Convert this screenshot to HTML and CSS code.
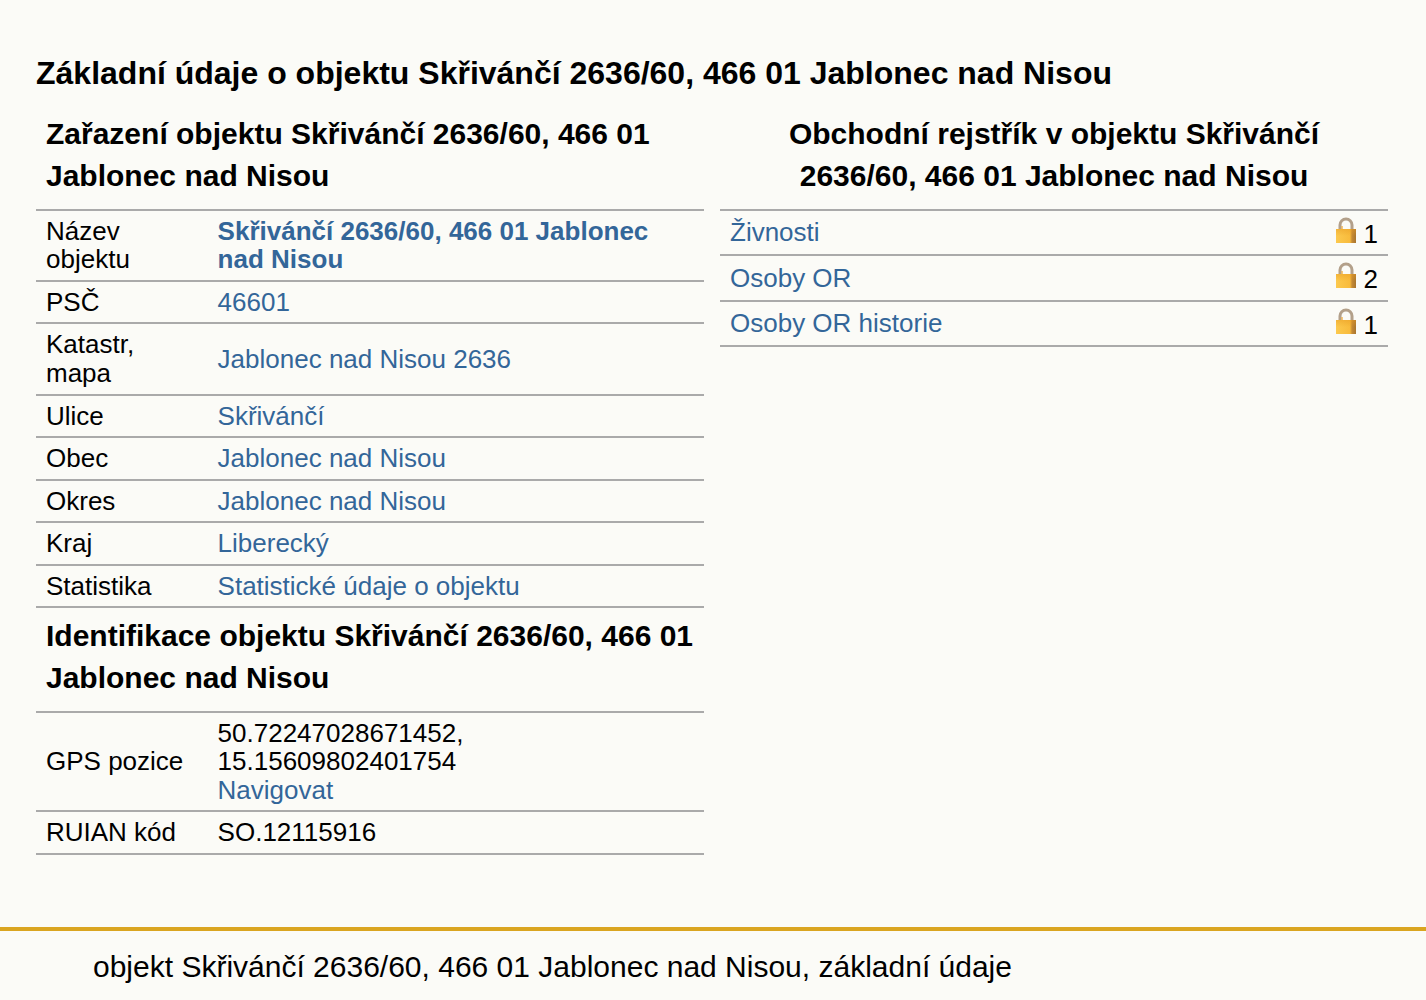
FILE: index.html
```html
<!DOCTYPE html>
<html lang="cs">
<head>
<meta charset="utf-8">
<title>Základní údaje o objektu</title>
<link rel="stylesheet" href="styles.css">
</head>
<body>
<main class="page">
  <h1 class="title">Základní údaje o objektu Skřivánčí 2636/60, 466 01 Jablonec nad Nisou</h1>
  <div class="columns">
    <section class="col">
      <h2 class="sub">Zařazení objektu Skřivánčí 2636/60, 466 01 Jablonec nad Nisou</h2>
      <table class="info">
        <tr><td class="key">Název objektu</td><td><a href="#" class="strong">Skřivánčí 2636/60, 466 01 Jablonec nad Nisou</a></td></tr>
        <tr><td class="key">PSČ</td><td><a href="#">46601</a></td></tr>
        <tr><td class="key">Katastr, mapa</td><td><a href="#">Jablonec nad Nisou 2636</a></td></tr>
        <tr><td class="key">Ulice</td><td><a href="#">Skřivánčí</a></td></tr>
        <tr><td class="key">Obec</td><td><a href="#">Jablonec nad Nisou</a></td></tr>
        <tr><td class="key">Okres</td><td><a href="#">Jablonec nad Nisou</a></td></tr>
        <tr><td class="key">Kraj</td><td><a href="#">Liberecký</a></td></tr>
        <tr><td class="key">Statistika</td><td><a href="#">Statistické údaje o objektu</a></td></tr>
      </table>
      <h2 class="sub second">Identifikace objektu Skřivánčí 2636/60, 466 01 Jablonec nad Nisou</h2>
      <table class="info">
        <tr><td class="key">GPS pozice</td><td>50.72247028671452, 15.15609802401754<br><a href="#">Navigovat</a></td></tr>
        <tr><td class="key">RUIAN kód</td><td>SO.12115916</td></tr>
      </table>
    </section>
    <section class="col">
      <h2 class="sub center">Obchodní rejstřík v objektu Skřivánčí 2636/60, 466 01 Jablonec nad Nisou</h2>
      <table class="info">
        <tr><td><a href="#">Živnosti</a></td><td class="count"><svg class="lock" viewBox="0 0 20 26"><use href="#lock"/></svg> 1</td></tr>
        <tr><td><a href="#">Osoby OR</a></td><td class="count"><svg class="lock" viewBox="0 0 20 26"><use href="#lock"/></svg> 2</td></tr>
        <tr><td><a href="#">Osoby OR historie</a></td><td class="count"><svg class="lock" viewBox="0 0 20 26"><use href="#lock"/></svg> 1</td></tr>
      </table>
    </section>
  </div>
</main>
<footer class="foot">objekt Skřivánčí 2636/60, 466 01 Jablonec nad Nisou, základní údaje</footer>
<svg class="defs" width="0" height="0">
  <defs>
    <linearGradient id="lockBody" x1="0" y1="0" x2="1" y2="0">
      <stop offset="0" stop-color="#fcc94e"/>
      <stop offset="0.7" stop-color="#f8bb3c"/>
      <stop offset="0.8" stop-color="#c58a34"/>
      <stop offset="1" stop-color="#a9752e"/>
    </linearGradient>
    <linearGradient id="lockShade" x1="0" y1="0" x2="0" y2="1">
      <stop offset="0" stop-color="#e89a20" stop-opacity="0.45"/>
      <stop offset="0.5" stop-color="#e89a20" stop-opacity="0"/>
    </linearGradient>
    <g id="lock">
      <path d="M4 12V8a6 6 0 0 1 12 0V12" fill="none" stroke="#b3a08a" stroke-width="3"/>
      <path d="M6 12V9" fill="none" stroke="#eeb04e" stroke-width="1.4"/>
      <rect x="0" y="12" width="20" height="14" fill="url(#lockBody)"/>
      <rect x="0" y="12" width="20" height="14" fill="url(#lockShade)"/>
    </g>
  </defs>
</svg>
</body>
</html>
```
FILE: styles.css
```css
* { box-sizing: border-box; }
html, body { margin: 0; padding: 0; }
body {
  background: #fbfbf7;
  color: #000;
  font-family: "Liberation Sans", Arial, sans-serif;
  font-size: 26px;
  height: 1000px;
  display: flex;
  flex-direction: column;
  overflow: hidden;
}
.page { flex: 1; padding: 52px 38px 0 36px; }
.title { margin: 0 0 19px; font-size: 32px; line-height: 42px; font-weight: bold; }
.columns { display: flex; gap: 16px; }
.col { flex: 1 1 0; min-width: 0; }
.sub { margin: 0; padding: 0 10px 11.85px; font-size: 30px; line-height: 42px; font-weight: bold; }
.second { padding-top: 6.65px; }
.center { text-align: center; }
.info { width: 100%; border-collapse: collapse; border-top: 2px solid #aaa; }
.info tr { border-bottom: 2px solid #aaa; }
.info td { padding: 6px 10px; line-height: 28.55px; vertical-align: middle; }
.info .key { width: 171.6px; }
.info a { color: #369; text-decoration: none; }
.info a.strong { font-weight: bold; }
.count { text-align: right; white-space: nowrap; }
.lock { width: 20px; height: 26px; }
.foot { border-top: 4px solid #daa520; height: 73px; padding: 17px 93px; font-size: 30px; line-height: 38px; }
.defs { position: absolute; }
```
